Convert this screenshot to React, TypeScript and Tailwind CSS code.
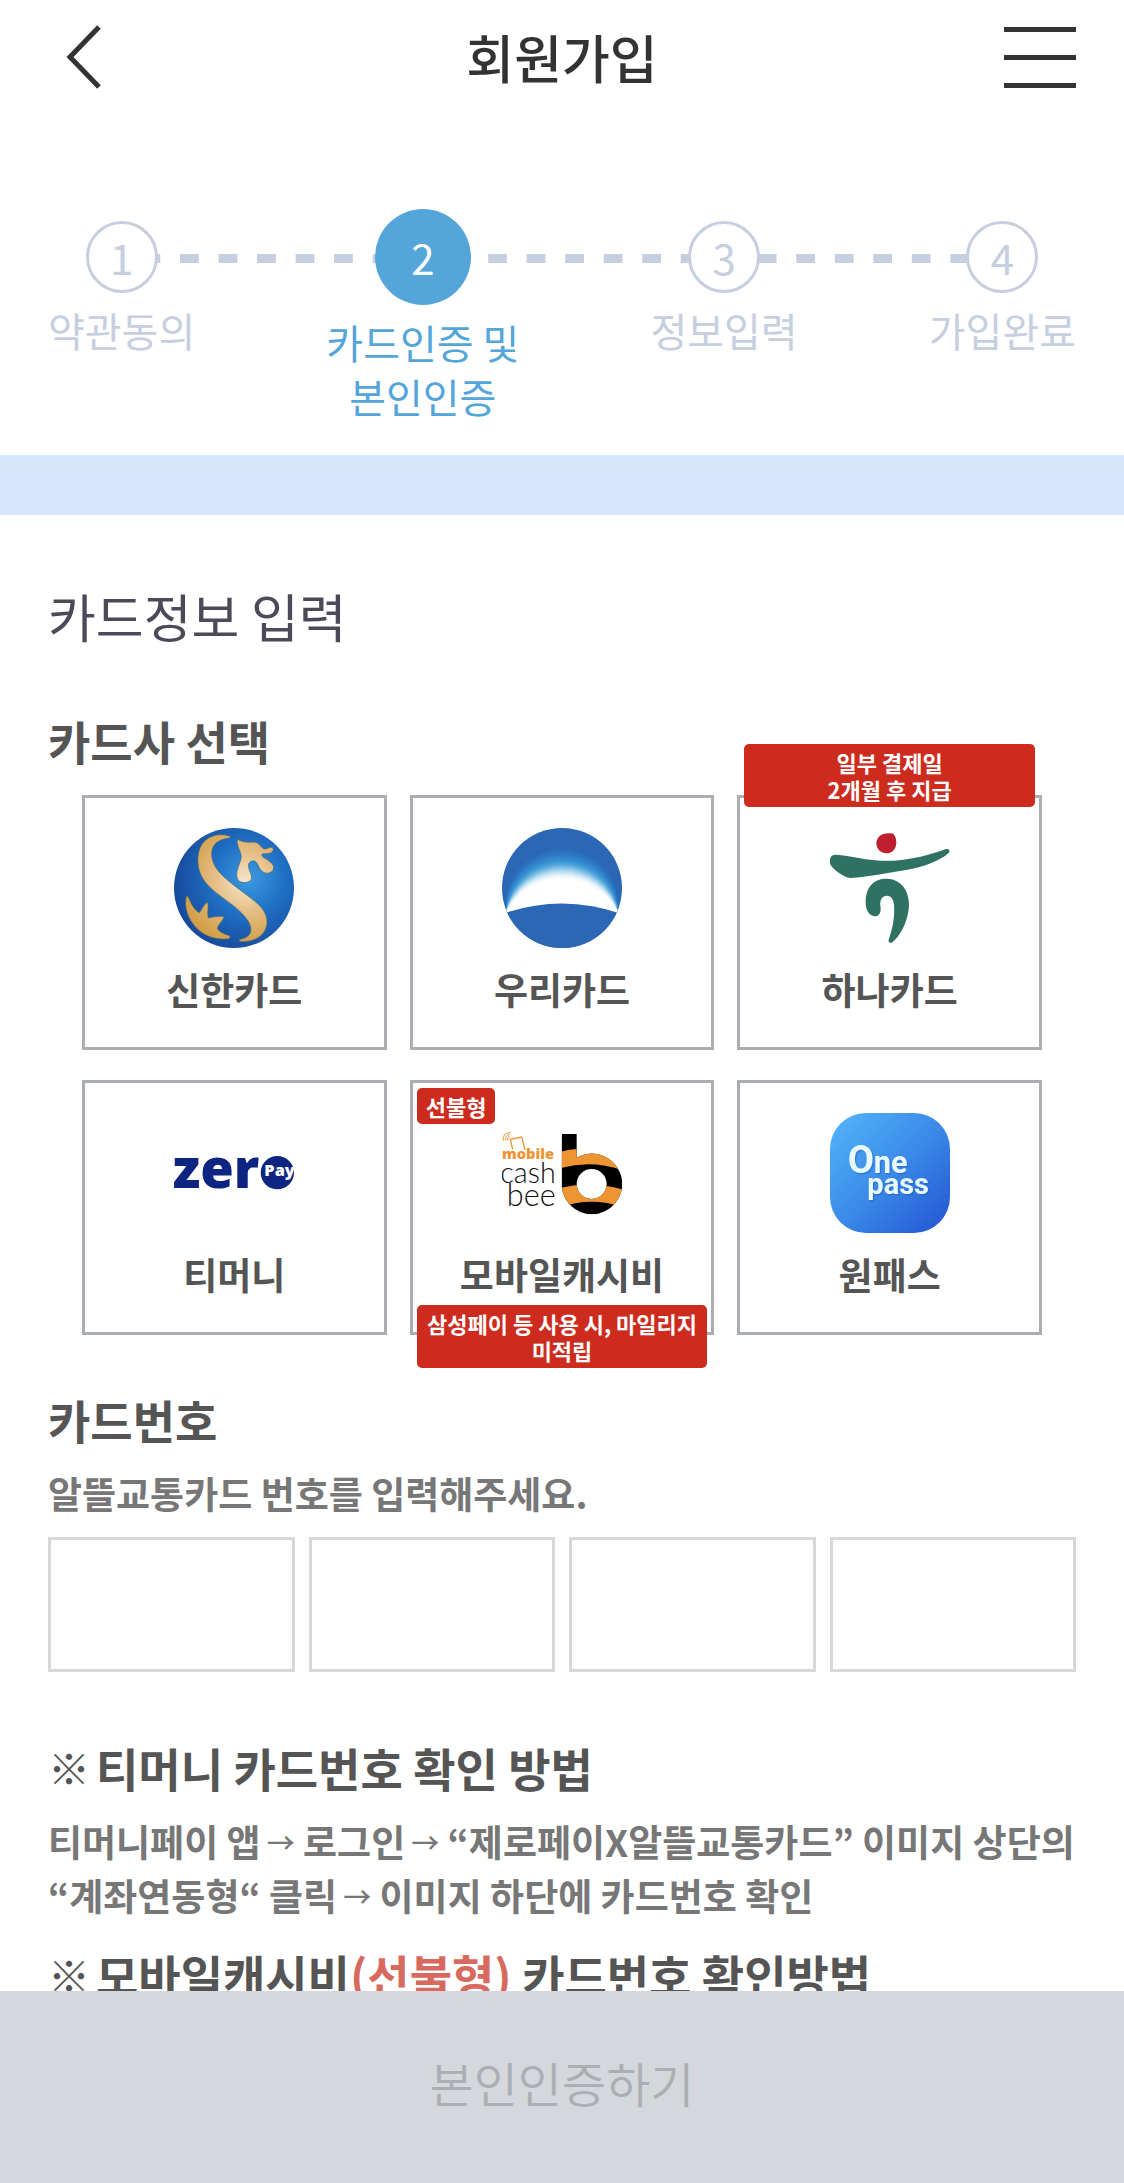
import { useState } from "react";
import type { ReactNode } from "react";

const STEPS = [
  { no: 1, label: ["약관동의"] },
  { no: 2, label: ["카드인증 및", "본인인증"] },
  { no: 3, label: ["정보입력"] },
  { no: 4, label: ["가입완료"] },
];

const CURRENT_STEP = 2;

function ShinhanLogo() {
  return (
    <svg viewBox="42 39 360 360" className="size-[120px]" aria-hidden="true">
      <defs>
        <radialGradient id="sh-ball" cx="0.62" cy="0.42" r="0.62">
          <stop offset="0" stopColor="#3d9ae0" />
          <stop offset="0.5" stopColor="#1f6fc4" />
          <stop offset="1" stopColor="#174a9c" />
        </radialGradient>
        <radialGradient id="sh-gold" gradientUnits="userSpaceOnUse" cx="255" cy="200" r="190">
          <stop offset="0" stopColor="#f6e6cc" />
          <stop offset="0.45" stopColor="#e6c08a" />
          <stop offset="1" stopColor="#d29f48" />
        </radialGradient>
      </defs>
      <circle cx="222" cy="219" r="180" fill="url(#sh-ball)" />
      <g fill="url(#sh-gold)" stroke="#4a6a66" strokeWidth="2">
        <path d="M208 63C180 54 150 61 132 80C110 103 108 150 124 183C146 226 196 250 234 284C262 309 276 330 272 350C268 366 250 371 240 373C236 376 237 380 243 380C280 381 312 366 320 332C325 306 312 282 288 262C256 234 212 208 180 174C158 150 150 122 158 99C166 78 188 72 208 69C212 67 212 64 208 63Z" />
        <path d="M233 73C250 84 268 82 282 81C296 82 300 92 307 99C317 107 326 96 336 97C343 101 340 110 331 114C320 119 306 112 305 121C308 130 332 136 340 152C344 168 330 177 316 174C300 170 296 152 289 142C283 134 270 137 266 147C262 162 277 176 274 192C269 205 244 206 235 196C224 180 234 158 240 142C246 126 244 118 239 107C234 96 229 80 233 73Z" />
        <path d="M79 245C71 275 84 312 110 340C136 366 172 376 207 371C212 368 211 363 206 361C192 357 178 351 173 341C172 329 190 317 192 305C176 302 160 306 145 309C140 295 148 272 142 261C132 268 126 284 118 293C104 286 92 264 86 248C84 244 81 243 79 245Z" />
      </g>
    </svg>
  );
}

// Glow bands of the Woori mark, outermost first: [top of the arc, colour]
const WOORI_BANDS: [number, string][] = [
  [96, "#2b69b7"],
  [102, "#2b6dba"],
  [108, "#2c73be"],
  [114, "#2d79c3"],
  [120, "#2f80c8"],
  [126, "#3287cd"],
  [132, "#378fd1"],
  [138, "#4098d6"],
  [144, "#4fa3da"],
  [149, "#62afdf"],
  [154, "#79bbe4"],
  [159, "#92c9ea"],
  [164, "#abd6ef"],
  [169, "#c3e1f4"],
  [174, "#d8ecf8"],
  [179, "#e8f4fb"],
  [184, "#f5fafd"],
  [190, "#ffffff"],
];

function wooriArc(top: number) {
  const h = 292 - top;
  const r = (168 * 168 + h * h) / (2 * h);
  return `M48 292A${r} ${r} 0 ${h > 168 ? 1 : 0} 1 384 292Z`;
}

function WooriLogo() {
  return (
    <svg viewBox="36 39 360 360" className="size-[120px]" aria-hidden="true">
      <clipPath id="wr-clip">
        <circle cx="216" cy="219" r="180" />
      </clipPath>
      <g clipPath="url(#wr-clip)">
        <rect x="36" y="39" width="360" height="360" fill="#2b67b5" />
        {WOORI_BANDS.map(([top, fill]) => (
          <path key={top} d={wooriArc(top)} fill={fill} />
        ))}
        <path d="M36 297Q216 234 396 297V400H36Z" fill="#2b67b5" />
      </g>
    </svg>
  );
}

function HanaLogo() {
  return (
    <svg viewBox="58 39 360 360" className="size-[120px]" aria-hidden="true">
      <path d="M248 56C264 76 259 114 227 115C209 114 197 101 197 84C198 64 216 50 248 56Z" fill="#be1e2d" />
      <g fill="#2f7263">
        <path d="M76 119C120 121 180 141 250 137C310 133 360 119 404 103C414 100 420 107 414 114C390 136 340 156 290 164C230 173 170 186 120 189C98 186 64 162 58 146C55 128 62 119 76 119Z" />
        <path d="M240 383C232 382 233 376 236 368C249 330 252 300 250 270C248 250 240 242 229 242C214 242 207 256 209 272C213 292 205 304 193 304C172 303 165 280 165 262C165 215 190 191 228 191C270 192 295 225 295 268C294 320 266 366 247 380C245 382 243 383 240 383Z" />
      </g>
    </svg>
  );
}

function ZeroPayLogo() {
  return (
    <svg viewBox="42 -51 360 360" className="size-[120px]" aria-hidden="true">
      <text x="38" y="173" fontFamily="'Open Sans', sans-serif" fontWeight="800" fontSize="163" fill="#0d2580">zer</text>
      <circle cx="352" cy="128" r="50" fill="#0d2580" />
      <text x="313" y="138" fontFamily="'Open Sans', sans-serif" fontWeight="800" fontSize="49" fill="#fff">Pay</text>
    </svg>
  );
}

function CashbeeLogo() {
  return (
    <svg viewBox="36 -21 360 360" className="size-[120px]" aria-hidden="true">
      <g fill="none" stroke="#ef9433" strokeWidth="4">
        <path d="M68 88L61 58L95 51L105 90" />
        <path d="M52 62Q50 54 60 50M46 62Q43 48 60 43M40 62Q36 40 61 37" strokeWidth="3" />
      </g>
      <text x="36" y="116" fontFamily="'Open Sans', sans-serif" fontWeight="800" fontSize="44" fill="#ef9433">mobile</text>
      <g fontFamily="Lato, sans-serif" fontWeight="300" fill="#111" textAnchor="end">
        <text x="197" y="190" fontSize="86">cash</text>
        <text x="197" y="259" fontSize="92">bee</text>
      </g>
      <clipPath id="cb-clip">
        <path clipRule="evenodd" d="M215 42H260V113A91 91 0 1 1 215 200ZM305 147A45 45 0 1 0 305 237A45 45 0 1 0 305 147Z" />
      </clipPath>
      <g clipPath="url(#cb-clip)">
        <rect x="210" y="40" width="190" height="250" fill="#000" />
        <path d="M210 96Q235 88 262 87L400 90V152Q305 118 210 145Z" fill="#ef9433" />
        <path d="M210 204Q305 180 400 209V262Q305 228 210 262Z" fill="#ef9433" />
      </g>
    </svg>
  );
}

function OnePassLogo() {
  return (
    <svg viewBox="43 39 360 360" className="size-[120px]" aria-hidden="true">
      <defs>
        <linearGradient id="op-bg" x1="0" y1="0" x2="1" y2="1">
          <stop offset="0.05" stopColor="#50b2f8" />
          <stop offset="0.5" stopColor="#3b8ae8" />
          <stop offset="0.95" stopColor="#2559d3" />
        </linearGradient>
        <filter id="op-shadow">
          <feDropShadow dx="4" dy="4" stdDeviation="2" floodColor="#1e56b8" floodOpacity="0.5" />
        </filter>
      </defs>
      <rect x="43" y="39" width="360" height="360" rx="108" fill="url(#op-bg)" />
      <g fontFamily="Roboto, sans-serif" fontWeight="700" fill="#e6faff" filter="url(#op-shadow)">
        <text x="96" y="218" fontSize="92"><tspan fontSize="114">O</tspan>ne</text>
        <text x="155" y="281" fontSize="87">pass</text>
      </g>
    </svg>
  );
}

type CardCompany = {
  id: string;
  name: string;
  logo: ReactNode;
  tag?: string;
  noticeTop?: string[];
  noticeBottom?: string[];
};

const COMPANIES: CardCompany[] = [
  { id: "shinhan", name: "신한카드", logo: <ShinhanLogo /> },
  { id: "woori", name: "우리카드", logo: <WooriLogo /> },
  { id: "hana", name: "하나카드", logo: <HanaLogo />, noticeTop: ["일부 결제일", "2개월 후 지급"] },
  { id: "tmoney", name: "티머니", logo: <ZeroPayLogo /> },
  {
    id: "cashbee",
    name: "모바일캐시비",
    logo: <CashbeeLogo />,
    tag: "선불형",
    noticeBottom: ["삼성페이 등 사용 시, 마일리지", "미적립"],
  },
  { id: "onepass", name: "원패스", logo: <OnePassLogo /> },
];

function Notice({ lines, className }: { lines: string[]; className: string }) {
  return (
    <span
      className={`absolute inset-x-1 rounded-[5px] bg-[#cc2b1e] pt-[5px] pb-1 text-center text-[22px] leading-[27px] font-bold whitespace-nowrap text-white ${className}`}
    >
      {lines.map((line) => (
        <span key={line} className="block">{line}</span>
      ))}
    </span>
  );
}

function GuideTitle({ children }: { children: ReactNode }) {
  return (
    <h3 className="flex gap-[6px] text-[46px] leading-[64px] font-bold whitespace-nowrap">
      <span className="text-[42px]">※</span>
      <span>{children}</span>
    </h3>
  );
}

function Arrow() {
  return <span className="ml-[6px] align-[3px] text-[28px] leading-none font-medium">→</span>;
}

export default function App() {
  const [company, setCompany] = useState("");
  const [digits, setDigits] = useState(["", "", "", ""]);

  function handleDigits(index: number, val: string) {
    setDigits(digits.map((d, i) => (i === index ? val.replace(/\D/g, "") : d)));
  }

  return (
    <div className="flex h-screen flex-col bg-white font-['Noto_Sans_CJK_KR',sans-serif] text-[#555]">
      <main className="min-h-0 flex-1 overflow-y-auto [scrollbar-width:none]">
        {/* Header */}
        <header className="flex h-[114px] items-center justify-between px-12">
          <button type="button" aria-label="뒤로" className="w-[72px] pl-[18px]">
            <svg width="36" height="64" viewBox="0 0 36 64" fill="none" stroke="#333" strokeWidth="5">
              <path d="M33 2L4 32L33 62" />
            </svg>
          </button>
          <h1 className="text-[52px] leading-[72px] font-medium text-[#333]">회원가입</h1>
          <button type="button" aria-label="메뉴" className="flex w-[72px] flex-col gap-[23px]">
            <span className="h-[5px] w-full bg-[#333]" />
            <span className="h-[5px] w-full bg-[#333]" />
            <span className="h-[5px] w-full bg-[#333]" />
          </button>
        </header>

        {/* Progress */}
        <nav aria-label="가입 단계" className="relative px-12 pt-[95px] pb-8">
          <div className="absolute top-[140px] right-[135px] left-[103px] h-[9px] bg-[linear-gradient(90deg,#c5cfe0_50%,transparent_50%)] bg-[length:calc(100%/23)_100%]" />
          <ol className="relative flex justify-between">
            {STEPS.map(({ no, label }) => {
              const active = no === CURRENT_STEP;
              return (
                <li
                  key={no}
                  aria-current={active ? "step" : undefined}
                  className={`flex flex-col items-center gap-[10px] text-center text-[40px] leading-[54px] ${
                    active ? "text-[#53a5da]" : "pt-3 text-[#c5cfe0]"
                  }`}
                >
                  <span
                    className={`flex items-center justify-center rounded-full pb-px text-[42px] ${
                      active ? "size-24 bg-[#53a5da] text-white" : "size-[72px] border-[3px] border-[#c5cfe0] bg-white"
                    }`}
                  >
                    {no}
                  </span>
                  <span>
                    {label.map((line) => (
                      <span key={line} className="block">{line}</span>
                    ))}
                  </span>
                </li>
              );
            })}
          </ol>
        </nav>

        <div className="h-[60px] bg-[#d6e6fd]" />

        <form id="card-form" className="px-12 pt-[65px]" onSubmit={(e) => e.preventDefault()}>
          <h2 className="text-[52px] leading-[72px] text-[#4a4a58]">카드정보 입력</h2>

          {/* Card companies */}
          <h3 className="mt-14 text-[46px] leading-[64px] font-bold">카드사 선택</h3>
          <div className="mt-[23px] grid grid-cols-3 gap-x-[23px] gap-y-[30px] px-[34px]">
            {COMPANIES.map((c) => (
              <button
                key={c.id}
                type="button"
                aria-pressed={company === c.id}
                onClick={() => setCompany(c.id)}
                className="relative flex flex-col items-center gap-[14px] border-[3px] border-[#aaadb1] pt-[30px] pb-[31px]"
              >
                {c.logo}
                <span className="text-[37px] leading-[54px] font-bold">{c.name}</span>
                {c.tag && (
                  <span className="absolute top-[5px] left-1 rounded-[5px] bg-[#cc2b1e] px-[9px] pt-[5px] pb-1 text-[22px] leading-[27px] font-bold text-white">
                    {c.tag}
                  </span>
                )}
                {c.noticeTop && <Notice lines={c.noticeTop} className="-top-[54px]" />}
                {c.noticeBottom && <Notice lines={c.noticeBottom} className="-bottom-9" />}
              </button>
            ))}
          </div>

          {/* Card number */}
          <h3 className="mt-[52px] text-[46px] leading-[64px] font-bold">카드번호</h3>
          <p id="card-no-hint" className="mt-[15px] text-[37px] leading-[54px] font-bold text-[#777]">
            알뜰교통카드 번호를 입력해주세요.
          </p>
          <div className="mt-[17px] grid grid-cols-4 gap-[14px]">
            {digits.map((value, i) => (
              <input
                key={i}
                aria-label={`카드번호 ${i + 1}번째 자리`}
                aria-describedby="card-no-hint"
                inputMode="numeric"
                maxLength={4}
                value={value}
                onChange={(e) => handleDigits(i, e.target.value)}
                className="h-[135px] w-full border-[3px] border-[#d8d8d8] text-center text-[46px] outline-none"
              />
            ))}
          </div>
        </form>

        {/* Guides */}
        <section className="px-12 pt-[63px]">
          <GuideTitle>티머니 카드번호 확인 방법</GuideTitle>
          <p className="mt-[15px] mb-5 text-[37px] leading-[54px] font-bold whitespace-nowrap text-[#777]">
            티머니페이 앱<Arrow /> 로그인<Arrow /> “제로페이X알뜰교통카드” 이미지 상단의
            <br />
            “계좌연동형“ 클릭<Arrow /> 이미지 하단에 카드번호 확인
          </p>
          <GuideTitle>
            모바일캐시비<span className="text-[#d8695f]">(선불형)</span> 카드번호 확인방법
          </GuideTitle>
        </section>
      </main>

      <button
        type="submit"
        form="card-form"
        disabled
        className="h-48 shrink-0 bg-[#d4d7dc] pb-[10px] text-[48px] leading-[64px] font-[350] text-[#abaeb3]"
      >
        본인인증하기
      </button>
    </div>
  );
}
